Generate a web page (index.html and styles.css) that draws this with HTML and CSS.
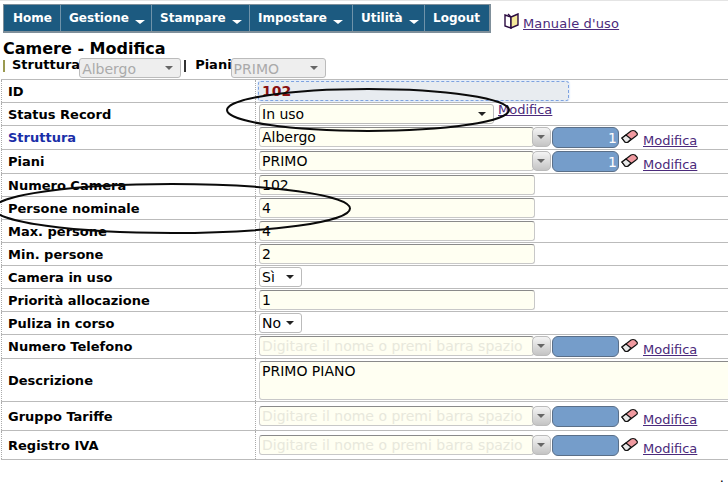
FILE: index.html
```html
<!DOCTYPE html>
<html lang="it">
<head>
  <meta charset="UTF-8">
  <title>Camere - Modifica</title>
  <link rel="stylesheet" href="styles.css">
</head>
<body>
  <div class="topbar">
    <ul class="menu">
      <li class="home"><a>Home</a></li>
      <li class="gest"><a>Gestione</a><i class="arrow"></i></li>
      <li class="stam"><a>Stampare</a><i class="arrow"></i></li>
      <li class="impo"><a>Impostare</a><i class="arrow"></i></li>
      <li class="util"><a>Utilità</a><i class="arrow"></i></li>
      <li class="logout"><a>Logout</a></li>
    </ul>
    <div class="manual">
      <svg class="book" width="16" height="16" viewBox="0 0 16 16">
        <path d="M1 2l6 2v11l-6-2z" fill="#fff" stroke="#2a0a40" stroke-width="1.4"/>
        <path d="M14 1l-7 3v11l7-3z" fill="#f4e89a" stroke="#2a0a40" stroke-width="1.4"/>
        <path d="M4 1l3 3" stroke="#2a0a40" stroke-width="1.4"/>
      </svg>
      <a class="link" href="#">Manuale d'uso</a>
    </div>
  </div>

  <h1 class="title">Camere - Modifica</h1>
  <div class="filters">
    <span class="sep"></span><b>Struttura</b>
    <span class="fake-select off wide">Albergo<i class="caret"></i></span>
    <span class="sep dark"></span><b>Piani</b>
    <span class="fake-select off">PRIMO<i class="caret"></i></span>
  </div>

  <table class="form">
    <tr class="r23"><th>ID</th><td><div class="field idbox">102</div></td></tr>
    <tr class="r23"><th>Status Record</th><td class="line"><span class="fake-select status">In uso<i class="caret"></i></span><a class="link mod-near" href="#">Modifica</a></td></tr>
    <tr class="r24"><th class="blue">Struttura</th><td>
      <div class="combo"><div class="field">Albergo</div><i class="drop"></i><div class="num">1</div><svg class="eraser" width="17" height="14" viewBox="0 0 17 14"><use href="#er"/></svg><a class="link" href="#">Modifica</a></div>
    </td></tr>
    <tr class="r24"><th>Piani</th><td>
      <div class="combo"><div class="field">PRIMO</div><i class="drop"></i><div class="num">1</div><svg class="eraser" width="17" height="14" viewBox="0 0 17 14"><use href="#er"/></svg><a class="link" href="#">Modifica</a></div>
    </td></tr>
    <tr class="r23"><th>Numero Camera</th><td><div class="field short">102</div></td></tr>
    <tr class="r23"><th>Persone nominale</th><td><div class="field short">4</div></td></tr>
    <tr class="r23"><th>Max. persone</th><td><div class="field short">4</div></td></tr>
    <tr class="r23"><th>Min. persone</th><td><div class="field short">2</div></td></tr>
    <tr class="r23"><th>Camera in uso</th><td><span class="fake-select tiny">Sì<i class="caret"></i></span></td></tr>
    <tr class="r23"><th>Priorità allocazione</th><td><div class="field short">1</div></td></tr>
    <tr class="r23"><th>Puliza in corso</th><td><span class="fake-select tiny">No<i class="caret"></i></span></td></tr>
    <tr class="r24"><th>Numero Telefono</th><td>
      <div class="combo"><div class="field ph">Digitare il nome o premi barra spazio</div><i class="drop"></i><div class="num"></div><svg class="eraser" width="17" height="14" viewBox="0 0 17 14"><use href="#er"/></svg><a class="link" href="#">Modifica</a></div>
    </td></tr>
    <tr class="r43"><th>Descrizione</th><td><div class="field area">PRIMO PIANO</div></td></tr>
    <tr class="r29"><th>Gruppo Tariffe</th><td>
      <div class="combo"><div class="field ph">Digitare il nome o premi barra spazio</div><i class="drop"></i><div class="num"></div><svg class="eraser" width="17" height="14" viewBox="0 0 17 14"><use href="#er"/></svg><a class="link" href="#">Modifica</a></div>
    </td></tr>
    <tr class="r29"><th>Registro IVA</th><td>
      <div class="combo"><div class="field ph">Digitare il nome o premi barra spazio</div><i class="drop"></i><div class="num"></div><svg class="eraser" width="17" height="14" viewBox="0 0 17 14"><use href="#er"/></svg><a class="link" href="#">Modifica</a></div>
    </td></tr>
  </table>
  <div class="dot">.</div>

  <!-- i due cerchi a mano sopra la pagina -->
  <svg class="marks" width="728" height="496" viewBox="0 0 728 496">
    <defs>
      <g id="er">
        <path d="M1 9l9-7q2-1 4 0l2 2q1 2-1 3l-8 6q-1 1-3 0z" fill="#f09aa0" stroke="#111" stroke-width="1.2"/>
        <path d="M1 9l4-3 5 4-3 3q-1 1-3 0z" fill="#e8e8e8" stroke="#111" stroke-width="1.2"/>
      </g>
    </defs>
    <ellipse cx="368" cy="110" rx="141" ry="21" fill="none" stroke="#0a0a0a" stroke-width="2"/>
    <ellipse cx="172" cy="208.5" rx="178" ry="24.5" fill="none" stroke="#0a0a0a" stroke-width="2"/>
  </svg>
</body>
</html>
```

FILE: styles.css
```css
body {
  margin: 0;
  background: #fff;
  color: #000;
  font-family: "DejaVu Sans", Verdana, sans-serif;
  font-size: 13px;
  border-top: 1px solid #e4e4e4;
  overflow: hidden;
}

.topbar {
  display: flex;
  align-items: flex-start;
  padding: 3px 0 0 3px;
}

.menu {
  display: flex;
  list-style: none;
  margin: 0;
  padding: 0;
  height: 29px;
  width: 488px;
  box-sizing: border-box;
  background: #1c5a80;
  border: 1px solid #7f8f9a;
  border-width: 1px 2px 2px 1px;
}

.menu li {
  display: flex;
  align-items: center;
  box-sizing: border-box;
  padding-left: 9px;
  color: #fff;
  font-size: 12px;
  font-weight: bold;
  border-right: 1px solid #6f93aa;
}

.menu .home { width: 57px; }
.menu .gest { width: 91px; padding-left: 8px; }
.menu .stam { width: 98px; padding-left: 8px; }
.menu .impo { width: 103px; padding-left: 8px; }
.menu .util { width: 72px; padding-left: 8px; }
.menu .logout { border-right: 0; padding-left: 8px; }

.arrow {
  width: 0;
  height: 0;
  margin: 7px 0 0 6px;
  border: 5px solid transparent;
  border-top: 4px solid #fff;
  border-bottom: 0;
}

.manual {
  display: flex;
  align-items: flex-start;
  gap: 3px;
  margin: 9px 0 0 13px;
}

.manual .link {
  margin-top: 3px;
  letter-spacing: 0.15px;
}

.link {
  color: #4b2a7b;
  text-decoration: underline;
  font-size: 13px;
}

.title {
  margin: 7px 0 0 3px;
  font-size: 16px;
  line-height: 18px;
  font-weight: bold;
}

.filters {
  display: flex;
  align-items: flex-start;
  height: 21px;
  padding-left: 3px;
  font-size: 13px;
}

.filters b { line-height: 14px; margin-left: 7px; }

.sep {
  width: 2px;
  height: 12px;
  margin-top: 2px;
  background: #9a9a50;
}

.sep.dark { background: #333; margin-left: 3px; margin-right: 2px; }

.fake-select {
  position: relative;
  display: inline-block;
  box-sizing: border-box;
  height: 20px;
  line-height: 19px;
  padding-left: 2px;
  border: 1px solid #bbb;
  border-radius: 3px;
  background: #fffff2;
  font-size: 14px;
}

.fake-select.off {
  width: 95px;
  background: #eee;
  color: #aaa;
  margin-left: -1px;
  line-height: 21px;
}

.fake-select.wide { width: 102px; }
.fake-select.status { width: 235px; }

.fake-select.tiny {
  width: 43px;
  background: #fff;
}

.caret {
  position: absolute;
  right: 7px;
  top: 7px;
  width: 0;
  height: 0;
  border: 4px solid transparent;
  border-top: 4px solid #222;
  border-bottom: 0;
}

.off .caret { border-top-color: #666; }

.form {
  border-collapse: collapse;
  table-layout: fixed;
  width: 727px;
  margin-left: 1px;
}

.form th,
.form td {
  padding: 0;
  border-top: 1px solid #bbb;
  border-bottom: 1px solid #bbb;
}

.form th {
  width: 254px;
  box-sizing: border-box;
  padding-left: 6px;
  text-align: left;
  font-size: 13px;
  border-left: 1px dotted #aaa;
  border-right: 1px dotted #aaa;
}

.form td { padding-left: 3px; overflow: hidden; }

.form .blue { color: #1a2ea8; }

.r23 { height: 23px; }
.r24 { height: 24px; }
.r29 { height: 29px; }
.r43 { height: 43px; }

.field {
  box-sizing: border-box;
  height: 20px;
  line-height: 19px;
  padding-left: 2px;
  border: 1px solid #c8c8c8;
  border-top-color: #8a8a8a;
  border-radius: 3px;
  background: #fffff2;
  font-size: 14px;
}

.short { width: 276px; }

.idbox {
  width: 311px;
  margin-left: -1px;
  padding-left: 3px;
  color: #8a1010;
  font-weight: bold;
  background: #e8ecf0;
  border: 1px dashed #7da2e0;
  box-shadow: 0 0 2px #9fc0ee;
}

.area {
  width: 490px;
  height: 39px;
  margin-top: 1px;
}

.line {
  white-space: nowrap;
}

.mod-near {
  margin-left: 4px;
  position: relative;
  top: -5px;
}

.combo {
  display: flex;
  align-items: flex-start;
}

.combo .field {
  width: 275px;
  flex: none;
  overflow: hidden;
  white-space: nowrap;
  margin-right: -2px;
}

.ph { color: #e8e8dc; }

.drop {
  position: relative;
  flex: none;
  box-sizing: border-box;
  width: 19px;
  height: 20px;
  margin-right: 1px;
  border: 1px solid #bbb;
  border-radius: 5px;
  background: linear-gradient(#f4f4f4, #c4c4c4);
}

.drop::after {
  content: "";
  position: absolute;
  left: 4px;
  top: 7px;
  border: 4px solid transparent;
  border-top: 4px solid #666;
  border-bottom: 0;
}

.num {
  flex: none;
  box-sizing: border-box;
  width: 67px;
  height: 21px;
  padding-right: 1px;
  line-height: 20px;
  text-align: right;
  color: #fff;
  font-size: 14px;
  background: #759dca;
  border: 1px solid #5a6f88;
  border-radius: 6px;
}

.eraser {
  flex: none;
  margin-left: 2px;
  margin-top: 2px;
}

.combo .link {
  margin-left: 5px;
  margin-top: 6px;
}

.dot {
  margin-top: 10px;
  padding-right: 4px;
  text-align: right;
  font-size: 13px;
}

.marks {
  position: absolute;
  left: 0;
  top: 0;
  pointer-events: none;
}
```
